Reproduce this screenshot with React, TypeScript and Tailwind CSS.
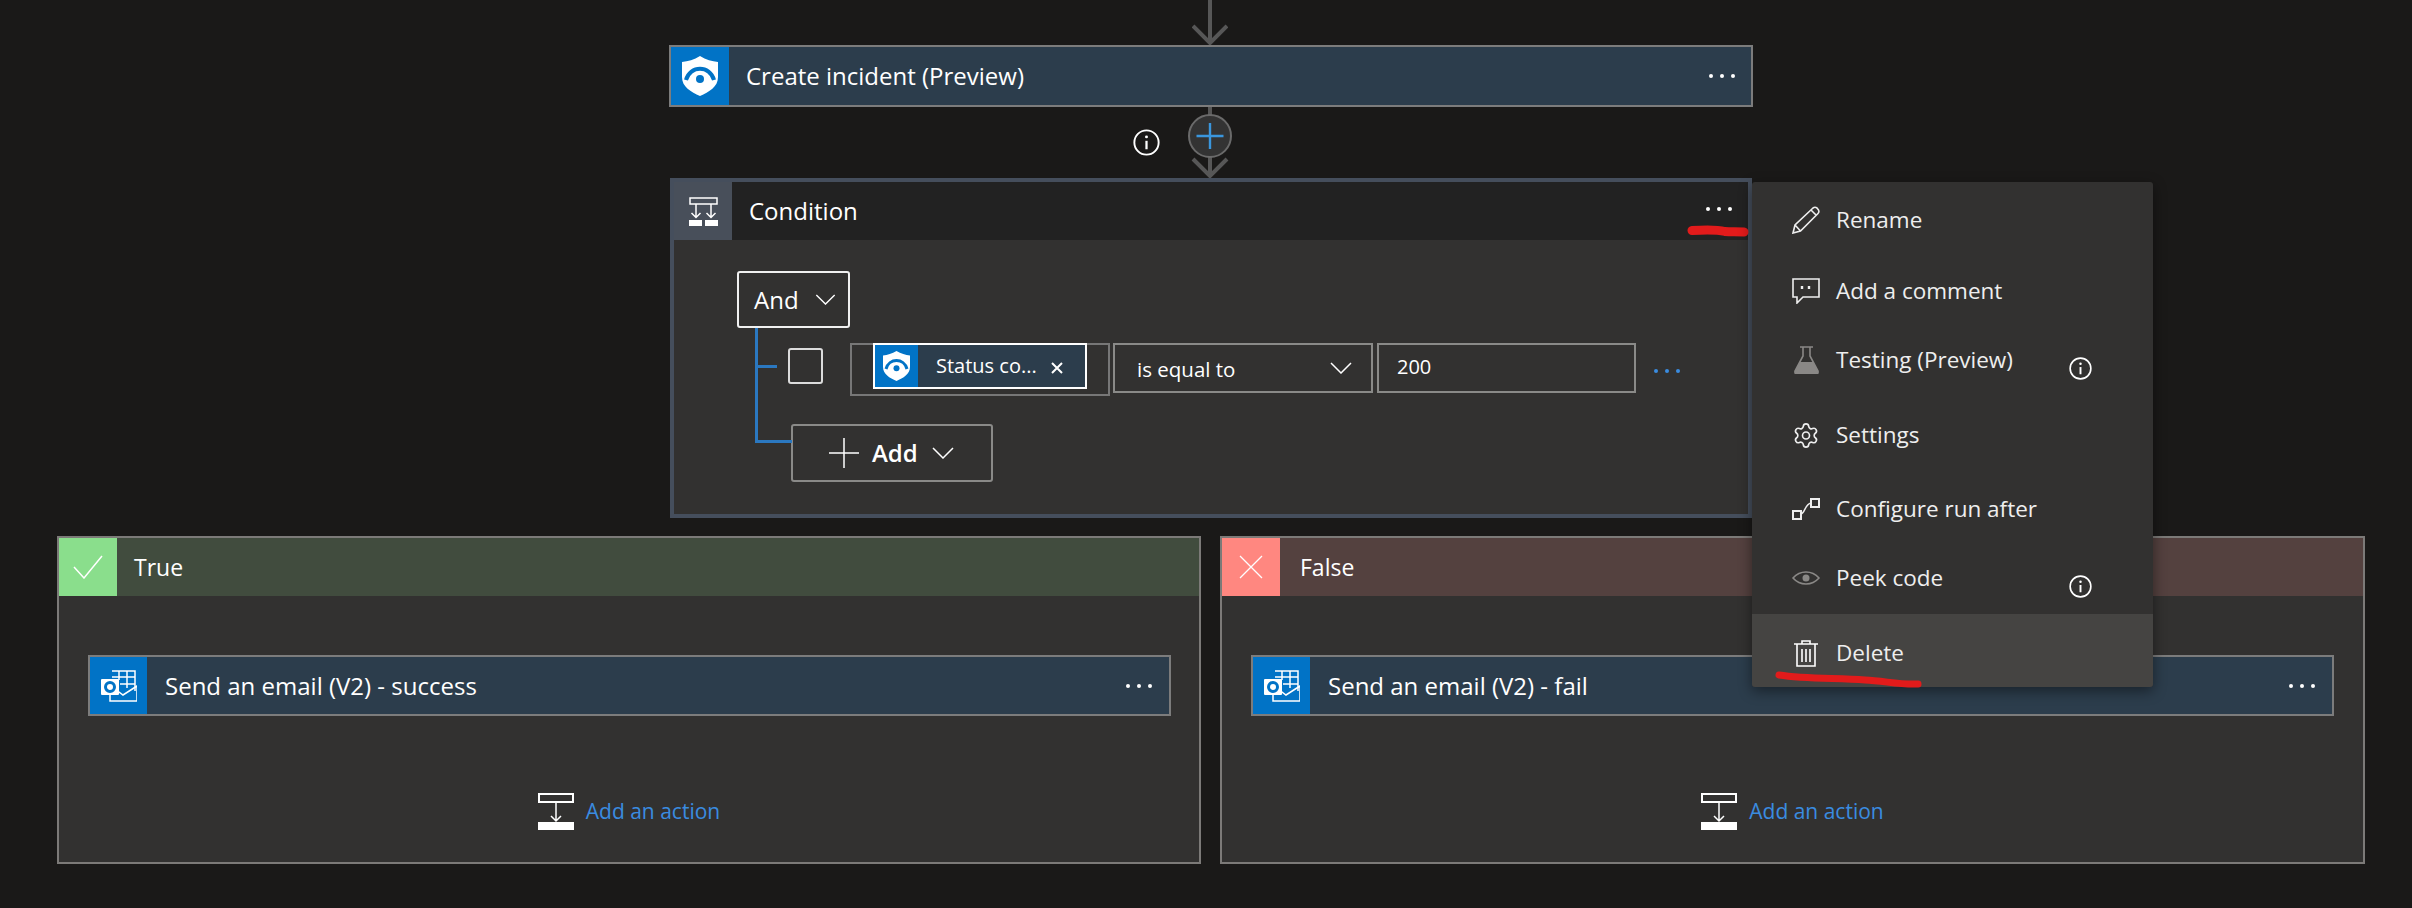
import React from 'react';
import { Settings } from 'lucide-react';

const ShieldIcon = ({ className }: { className: string }) => (
  <svg viewBox="0 0 36 40" className={className}>
    <path d="M18 0C24 4 30 5 36 6V21C36 31 27 36 18 40C9 36 0 31 0 21V6C6 5 12 4 18 0Z" fill="#fff" />
    <path d="M4 24C8 9 28 9 32 24" fill="none" stroke="#0173c6" strokeWidth="4" />
    <circle cx="18" cy="23" r="4" fill="#0173c6" />
  </svg>
);

const OutlookIcon = () => (
  <svg viewBox="0 0 36 32" className="w-[36px] h-[32px]" fill="none" stroke="#fff" strokeWidth="1.5">
    <path d="M11 1H34V21M18 1V10M26 1V18M11 7H34M19 14H34" />
    <path d="M9 17V31H36V16L22 25L14 19" />
    <rect x="0" y="9" width="18" height="16" rx="1" fill="#fff" stroke="none" />
    <circle cx="9" cy="17" r="4.5" stroke="#0173c6" strokeWidth="3" />
  </svg>
);

const ConditionIcon = () => (
  <svg viewBox="0 0 29 29" className="w-[29px] h-[29px]" fill="none" stroke="#fff" strokeWidth="1.5">
    <rect x="1" y="1" width="27" height="6" />
    <path d="M7 7V20M2.5 16L7 20.5L11.5 16M22 7V20M17.5 16L22 20.5L26.5 16" />
    <rect x="0" y="23" width="13" height="6" fill="#fff" stroke="none" />
    <rect x="16" y="23" width="13" height="6" fill="#fff" stroke="none" />
  </svg>
);

const AddActionIcon = () => (
  <svg viewBox="0 0 36 37" className="w-[36px] h-[37px] shrink-0" fill="none" stroke="#fff" strokeWidth="1.5">
    <rect x="1" y="1" width="34" height="8" strokeWidth="2" />
    <path d="M18 9V28M13 23L18 28L23 23" />
    <rect x="0" y="29" width="36" height="8" fill="#fff" stroke="none" />
  </svg>
);

const InfoIcon = ({ className }: { className: string }) => (
  <svg viewBox="0 0 24 24" className={className} fill="none" stroke="#fff">
    <circle cx="12" cy="12" r="10.8" strokeWidth="1.7" />
    <path d="M12 10.5V18" strokeWidth="2" />
    <circle cx="12" cy="7" r="1.3" fill="#fff" stroke="none" />
  </svg>
);

const Chevron = ({ className }: { className: string }) => (
  <svg viewBox="0 0 22 12" className={className} fill="none" stroke="#fff" strokeWidth="1.5">
    <path d="M1 1L11 11L21 1" />
  </svg>
);

const Dots = ({ color = 'bg-white' }: { color?: string }) => (
  <div className="flex gap-[7px]">
    <span className={`w-[4px] h-[4px] rounded-full ${color}`} />
    <span className={`w-[4px] h-[4px] rounded-full ${color}`} />
    <span className={`w-[4px] h-[4px] rounded-full ${color}`} />
  </div>
);

const EmailCard = ({ title, width, iconWidth }: { title: string; width: string; iconWidth: string }) => (
  <div className={`${width} h-[61px] border-2 border-[#7c7c7c] bg-[#2c3d4c] flex items-center`}>
    <div className={`${iconWidth} h-full bg-[#0173c6] flex items-center justify-center shrink-0`}>
      <OutlookIcon />
    </div>
    <span className="ml-[18px] text-[24px] text-white">{title}</span>
    <div className="ml-auto mr-[17px]">
      <Dots />
    </div>
  </div>
);

const menuItems = [
  {
    label: 'Rename',
    height: 'h-[75px]',
    icon: (
      <svg viewBox="0 0 28 28" className="w-[28px] h-[28px]" fill="none" stroke="#eee" strokeWidth="1.6">
        <path d="M1 27L3 19L21 2Q23 0.5 25 2L26.5 4Q27.5 6 26 7.5L8.5 25ZM3 19L8.5 25M19 4L24 9" />
      </svg>
    ),
  },
  {
    label: 'Add a comment',
    height: 'h-[68px]',
    icon: (
      <svg viewBox="0 0 28 26" className="w-[28px] h-[26px]" fill="none" stroke="#eee" strokeWidth="1.6">
        <path d="M1 1H27V19H11L5 25V19H1Z" />
        <path d="M10 8V11M17 8V11" strokeWidth="2.4" />
      </svg>
    ),
  },
  {
    label: 'Testing (Preview)',
    height: 'h-[69px]',
    info: true,
    icon: (
      <svg viewBox="0 0 25 28" className="w-[25px] h-[28px]">
        <path d="M6 1H19M9 1V10L1 25Q0.5 28 3 28H22Q24.5 28 24 25L16 10V1" fill="none" stroke="#8a8886" strokeWidth="1.6" />
        <path d="M6 16H19L24 25Q24.5 28 22 28H3Q0.5 28 1 25Z" fill="#8a8886" />
      </svg>
    ),
  },
  {
    label: 'Settings',
    height: 'h-[82px]',
    icon: <Settings className="w-[29px] h-[29px]" color="#eee" strokeWidth={1.4} />,
  },
  {
    label: 'Configure run after',
    height: 'h-[65px]',
    icon: (
      <svg viewBox="0 0 28 22" className="w-[28px] h-[22px]" fill="none" stroke="#eee" strokeWidth="2">
        <rect x="1" y="13" width="8" height="8" />
        <rect x="19" y="1" width="8" height="8" />
        <path d="M9 16C13 15 13 6 19 5" strokeWidth="1.5" />
      </svg>
    ),
  },
  {
    label: 'Peek code',
    height: 'h-[73px]',
    info: true,
    icon: (
      <svg viewBox="0 0 28 14" className="w-[28px] h-[14px]" fill="none" stroke="#8a8886" strokeWidth="1.6">
        <path d="M1 7C8 -1 20 -1 27 7C20 15 8 15 1 7Z" />
        <circle cx="14" cy="7" r="3.5" fill="#8a8886" stroke="none" />
      </svg>
    ),
  },
  {
    label: 'Delete',
    height: 'h-[73px] bg-[#454442] pt-[5px]',
    icon: (
      <svg viewBox="0 0 24 27" className="w-[24px] h-[27px]" fill="none" stroke="#fff" strokeWidth="1.6">
        <path d="M0 4H24M8 4V1H16V4M3 4V26H21V4" />
        <path d="M8 9V22M12 9V22M16 9V22" />
      </svg>
    ),
  },
];

const App: React.FC = () => {
  return (
    <div className="w-[2412px] h-[908px] overflow-hidden bg-[#1a1918] text-white [font-family:'Open_Sans',sans-serif]">
      <svg viewBox="0 0 36 45" className="ml-[1192px] w-[36px] h-[45px]" fill="none" stroke="#575757" strokeWidth="4">
        <path d="M18 0V43M1 26L18 43L35 26" />
      </svg>

      {/* Create incident */}
      <div className="ml-[669px] w-[1084px] h-[62px] border-2 border-[#7c7c7c] bg-[#2c3d4c] flex items-center">
        <div className="w-[58px] h-full bg-[#0173c6] flex items-center justify-center shrink-0">
          <ShieldIcon className="w-[36px] h-[40px]" />
        </div>
        <span className="ml-[17px] text-[24px]">Create incident (Preview)</span>
        <div className="ml-auto mr-[16px]">
          <Dots />
        </div>
      </div>

      {/* connector between the cards */}
      <div className="ml-[1133px] w-[100px] h-[71px] flex">
        <InfoIcon className="w-[27px] h-[27px] mt-[22px] shrink-0" />
        <svg viewBox="0 0 60 71" className="ml-[27px] w-[60px] h-[71px] shrink-0" fill="none">
          <path d="M23 0V8M23 50V69M6 52L23 69L40 52" stroke="#575757" strokeWidth="4" />
          <circle cx="23" cy="29" r="21" fill="#333" stroke="#6a6a6a" strokeWidth="2" />
          <path d="M23 16V42M9.5 29H36.5" stroke="#3a96dd" strokeWidth="2.4" />
        </svg>
      </div>

      {/* Condition */}
      <div className="relative ml-[670px] w-[1082px] h-[340px] border-4 border-[#454e5c] bg-[#323130]">
        <div className="h-[58px] bg-[#222222] flex items-center">
          <div className="w-[58px] h-full bg-[#484f5a] flex items-center justify-center shrink-0">
            <ConditionIcon />
          </div>
          <span className="ml-[17px] text-[24px]">Condition</span>
          <div className="ml-auto mr-[16px] -mt-[4px]">
            <Dots />
          </div>
        </div>

        <div className="relative pl-[63px] pt-[31px]">
          {/* tree lines */}
          <div className="absolute left-[81px] top-[88px] w-[22px] h-[115px] border-l-[3px] border-[#2b78c0]" />
          <div className="absolute left-[81px] top-[125px] w-[22px] h-[3px] bg-[#2b78c0]" />
          <div className="absolute left-[81px] top-[200px] w-[37px] h-[3px] bg-[#2b78c0]" />

          <div className="w-[113px] h-[57px] border-2 border-[#f0f0f0] rounded-[3px] flex items-center pl-[15px]">
            <span className="text-[24px]">And</span>
            <Chevron className="ml-[16px] w-[21px] h-[11px]" />
          </div>

          <div className="mt-[15px] flex items-start">
            <div className="ml-[51px] mt-[5px] w-[35px] h-[36px] border-2 border-[#dcdcdc] rounded-[3px] shrink-0" />
            <div className="ml-[27px] w-[260px] h-[53px] border-2 border-[#777] pl-[21px] shrink-0">
              <div className="-mt-[2px] w-[214px] h-[46px] border-2 border-white bg-[#2c3d4c] flex items-center">
                <div className="w-[43px] h-full bg-[#0173c6] flex items-center justify-center shrink-0">
                  <ShieldIcon className="w-[27px] h-[30px]" />
                </div>
                <span className="ml-[18px] text-[20px] whitespace-nowrap">Status co...</span>
                <svg viewBox="0 0 12 12" className="ml-auto mr-[22px] mt-[4px] w-[12px] h-[12px]" fill="none" stroke="#fff" strokeWidth="2">
                  <path d="M1 1L11 11M11 1L1 11" />
                </svg>
              </div>
            </div>
            <div className="ml-[3px] w-[260px] h-[50px] border-2 border-[#8a8a88] flex items-center pl-[22px] pr-[19px] shrink-0">
              <span className="text-[20.5px] mt-[2px]">is equal to</span>
              <Chevron className="ml-auto w-[22px] h-[12px]" />
            </div>
            <div className="ml-[4px] w-[259px] h-[50px] border-2 border-[#8a8a88] flex items-center pl-[18px] shrink-0">
              <span className="text-[20px] -mt-[2px]">200</span>
            </div>
            <div className="ml-[18px] mt-[26px]">
              <Dots color="bg-[#3a8ce0]" />
            </div>
          </div>

          <div className="mt-[28px] ml-[54px] w-[202px] h-[58px] border-2 border-[#8a8a88] rounded-[3px] flex items-center pl-[36px]">
            <svg viewBox="0 0 30 30" className="w-[30px] h-[30px]" fill="none" stroke="#fff" strokeWidth="1.5">
              <path d="M15 0V30M0 15H30" />
            </svg>
            <span className="ml-[13px] text-[24px] font-semibold">Add</span>
            <Chevron className="ml-[14px] w-[22px] h-[12px]" />
          </div>
        </div>

        {/* red annotation under the dots */}
        <svg viewBox="0 0 62 12" className="absolute left-[1013px] top-[43px] w-[62px] h-[12px]" fill="none">
          <path d="M5 5.5C20 4.5 32 5 38 6.5C44 7 50 6.5 57 7" stroke="#e21b1b" strokeWidth="9" strokeLinecap="round" />
        </svg>

        {/* context menu */}
        <div className="absolute left-[1078px] top-0 z-10 w-[401px] rounded-[3px] bg-[#323130] shadow-[0_4px_14px_rgba(0,0,0,0.45)] overflow-hidden">
          {menuItems.map((item) => (
            <div key={item.label} className={`${item.height} flex items-center pl-[40px]`}>
              <div className="w-[28px] flex justify-center shrink-0">{item.icon}</div>
              <span className="ml-[16px] text-[22.5px] text-[#eeeeee]">{item.label}</span>
              {item.info && <InfoIcon className="ml-auto mr-[61px] mt-[18px] w-[23px] h-[23px]" />}
            </div>
          ))}
        </div>

        {/* red annotation under Delete */}
        <svg viewBox="0 0 148 18" className="absolute left-[1101px] top-[489px] z-20 w-[148px] h-[18px]" fill="none">
          <path d="M4 4C30 8 60 7 90 9C110 10 125 14 143 13" stroke="#e21b1b" strokeWidth="7" strokeLinecap="round" />
        </svg>
      </div>

      {/* branches */}
      <div className="mt-[18px] ml-[57px] flex gap-[19px]">
        <div className="w-[1144px] h-[328px] border-2 border-[#7c7a78] bg-[#323130]">
          <div className="h-[58px] bg-[#414c3e] flex items-center">
            <div className="w-[58px] h-full bg-[#8ade8c] flex items-center justify-center shrink-0">
              <svg viewBox="0 0 30 24" className="w-[30px] h-[24px]" fill="none" stroke="#fff" strokeWidth="1.5">
                <path d="M1 12L11 23L29 1" />
              </svg>
            </div>
            <span className="ml-[17px] text-[23px]">True</span>
          </div>
          <div className="pt-[59px] pl-[29px]">
            <EmailCard title="Send an email (V2) - success" width="w-[1083px]" iconWidth="w-[57px]" />
          </div>
          <div className="mt-[77px] flex justify-center items-center">
            <AddActionIcon />
            <span className="ml-[12px] text-[21px] text-[#3a8ce0]">Add an action</span>
          </div>
        </div>

        <div className="w-[1145px] h-[328px] border-2 border-[#7c7a78] bg-[#323130]">
          <div className="h-[58px] bg-[#54413f] flex items-center">
            <div className="w-[58px] h-full bg-[#ff8780] flex items-center justify-center shrink-0">
              <svg viewBox="0 0 24 24" className="w-[24px] h-[24px]" fill="none" stroke="#fff" strokeWidth="1.3">
                <path d="M1 1L23 23M23 1L1 23" />
              </svg>
            </div>
            <span className="ml-[20px] text-[23px]">False</span>
          </div>
          <div className="pt-[59px] pl-[29px]">
            <EmailCard title="Send an email (V2) - fail" width="w-[1083px]" iconWidth="w-[57px]" />
          </div>
          <div className="mt-[77px] flex justify-center items-center">
            <AddActionIcon />
            <span className="ml-[12px] text-[21px] text-[#3a8ce0]">Add an action</span>
          </div>
        </div>
      </div>
    </div>
  );
};

export default App;
